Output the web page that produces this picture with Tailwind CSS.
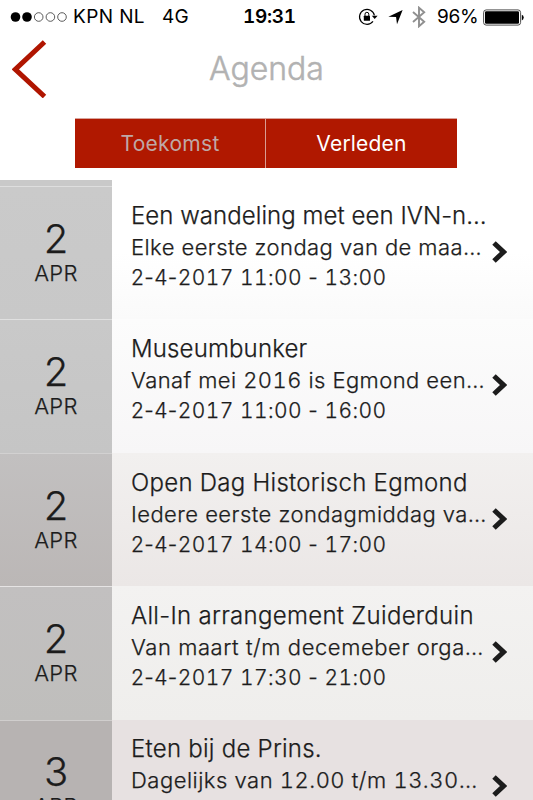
<!DOCTYPE html>
<html lang="nl">
  <head>
    <meta charset="UTF-8" />
    <meta name="viewport" content="width=device-width, initial-scale=1.0" />
    <title>Agenda</title>
    <script src="https://cdn.jsdelivr.net/npm/@tailwindcss/browser@4"></script>
  </head>
  <body
    class="h-[800px] w-[533px] overflow-hidden bg-white font-['Inter','Liberation_Sans',sans-serif] text-[#1c1c1c]"
  >
    <!-- Status bar -->
    <div class="flex h-[34px] items-center text-[19px] leading-[34px] text-black">
      <svg class="ml-[10px] h-[12px] w-[58px] shrink-0" viewBox="0 0 58 12">
        <circle cx="5.5" cy="6" r="4.8" />
        <circle cx="17" cy="6" r="4.8" />
        <g fill="none" stroke="#333" stroke-width="0.8">
          <circle cx="28.7" cy="6" r="4.3" />
          <circle cx="40.4" cy="6" r="4.3" />
          <circle cx="52" cy="6" r="4.3" />
        </g>
      </svg>
      <span class="ml-[5px] w-[89px] shrink-0 tracking-[0.4px] whitespace-nowrap">KPN NL</span>
      <span class="w-[81px] shrink-0 tracking-[0.2px]">4G</span>
      <span class="w-[115px] shrink-0 font-semibold tracking-[-0.3px] tabular-nums">19:31</span>
      <!-- Rotation lock -->
      <svg class="h-[20px] w-[20px] shrink-0" viewBox="0 0 20 20">
        <path
          d="M16.4 8.4A7.5 7.5 0 1 0 15 14.4"
          fill="none"
          stroke="#000"
          stroke-width="1.2"
        />
        <path d="M13.8 8.8H19.6L16.7 12Z" />
        <rect x="5.8" y="8.8" width="6.2" height="5" rx="0.5" />
        <path
          d="M7 9V7.2a1.9 1.9 0 0 1 3.8 0V9"
          fill="none"
          stroke="#000"
          stroke-width="1"
        />
      </svg>
      <!-- Location -->
      <svg class="ml-[10px] h-[16px] w-[15px] shrink-0" viewBox="0 0 16 16">
        <path d="M15.6 0.4L9.6 15.6L8.6 8L0.4 7.6Z" />
      </svg>
      <!-- Bluetooth -->
      <svg class="ml-[9px] h-[22px] w-[14px] shrink-0" viewBox="0 0 14 22">
        <path
          d="M1 6L12.2 15.8L7 20.3V1.7L12.2 6.2L1 16"
          fill="none"
          stroke="#909090"
          stroke-width="1.9"
        />
      </svg>
      <span class="ml-[11px] w-[46px] shrink-0 tracking-[-0.3px]">96%</span>
      <!-- Battery -->
      <svg class="h-[17px] w-[42px] shrink-0" viewBox="0 0 42 17">
        <rect
          x="0.6"
          y="0.9"
          width="37"
          height="15.2"
          rx="2.6"
          fill="none"
          stroke="#222"
          stroke-width="0.8"
        />
        <rect x="2" y="2.3" width="34" height="12.4" rx="1.2" />
        <path d="M38.8 5.8a3 3 0 0 1 0 5.6Z" />
      </svg>
    </div>

    <!-- Header -->
    <div class="grid h-[84px] grid-cols-[112px_1fr_112px]">
      <button class="flex items-start pt-[6px] pl-[12px]">
        <svg class="h-[58px] w-[35px]" viewBox="0 0 35 58">
          <path
            d="M32.5 2L3.3 29.3L32.5 56.5"
            fill="none"
            stroke="#b01500"
            stroke-width="5"
          />
        </svg>
      </button>
      <h1 class="pt-[15px] text-center text-[32px] leading-[40px] font-light text-[#b2b2b2] [-webkit-text-stroke:0.5px]">
        Agenda
      </h1>
    </div>

    <!-- Tabs -->
    <div
      class="ml-[75px] flex h-[50px] w-[382px] border-t border-[#d8a49c] bg-[#b01800] text-center text-[21px] leading-[49px]"
    >
      <div class="w-[191px] border-r border-[#d99c92] text-[#bfa8a6] tracking-[0.3px]">Toekomst</div>
      <div class="flex-1 text-white tracking-[0.2px]">Verleden</div>
    </div>

    <!-- Event list -->
    <div class="mt-[12px] h-[620px] overflow-hidden font-light [-webkit-text-stroke:0.25px]">
      <div class="flex h-[6px]">
        <div class="w-[112px] bg-[#c9c9c9]"></div>
      </div>

      <div class="flex h-[133.4px] bg-linear-to-b from-white via-white to-[#fafafa]">
        <div class="w-[112px] border-t border-[#dedede] bg-linear-to-b from-[#cacaca] to-[#c8c8c8] pt-[31px] text-center">
          <div class="text-[40px] leading-[42px]">2</div>
          <div class="text-[22px] leading-[26px] tracking-[0.3px]">APR</div>
        </div>
        <div class="w-[379px] pt-[14px] pl-[19px] whitespace-nowrap">
          <h2 class="text-[24px] leading-[32px] font-light tracking-[0.05px]">Een wandeling met een IVN-n…</h2>
          <p class="text-[22px] leading-[31px] tracking-[0.43px]">Elke eerste zondag van de maa…</p>
          <p class="text-[21px] leading-[29px] tracking-[0.4px]">
            2-4-<span class="tabular-nums">2017</span> <span class="tabular-nums">11:00</span> -
            <span class="tabular-nums">13:00</span>
          </p>
        </div>
        <svg class="mt-[55px] h-[22px] w-[16px] shrink-0" viewBox="0 0 16 22">
          <path d="M3 2L12.5 11L3 20" fill="none" stroke="#1c1c1c" stroke-width="5" />
        </svg>
      </div>

      <div class="flex h-[133.4px] bg-linear-to-b from-[#fcfcfc] to-[#f7f6f7]">
        <div class="w-[112px] border-t border-[#e0e0e0] bg-linear-to-b from-[#c9c9c9] to-[#c5c5c5] pt-[31px] text-center">
          <div class="text-[40px] leading-[42px]">2</div>
          <div class="text-[22px] leading-[26px] tracking-[0.3px]">APR</div>
        </div>
        <div class="w-[379px] pt-[14px] pl-[19px] whitespace-nowrap">
          <h2 class="text-[24px] leading-[32px] font-light tracking-[0.15px]">Museumbunker</h2>
          <p class="text-[22px] leading-[31px] tracking-[0.43px]">
            Vanaf mei <span class="tabular-nums">2016</span> is Egmond een…
          </p>
          <p class="text-[21px] leading-[29px] tracking-[0.4px]">
            2-4-<span class="tabular-nums">2017</span> <span class="tabular-nums">11:00</span> -
            <span class="tabular-nums">16:00</span>
          </p>
        </div>
        <svg class="mt-[55px] h-[22px] w-[16px] shrink-0" viewBox="0 0 16 22">
          <path d="M3 2L12.5 11L3 20" fill="none" stroke="#1c1c1c" stroke-width="5" />
        </svg>
      </div>

      <div class="flex h-[133.4px] bg-linear-to-b from-[#f2f0ef] to-[#ebe7e6]">
        <div class="w-[112px] border-t border-[#d2d1d1] bg-linear-to-b from-[#c2c0c0] to-[#bbb7b6] pt-[31px] text-center">
          <div class="text-[40px] leading-[42px]">2</div>
          <div class="text-[22px] leading-[26px] tracking-[0.3px]">APR</div>
        </div>
        <div class="w-[379px] pt-[14px] pl-[19px] whitespace-nowrap">
          <h2 class="text-[24px] leading-[32px] font-light tracking-[0.27px]">Open Dag Historisch Egmond</h2>
          <p class="text-[22px] leading-[31px] tracking-[0.45px]">Iedere eerste zondagmiddag va…</p>
          <p class="text-[21px] leading-[29px] tracking-[0.4px]">
            2-4-<span class="tabular-nums">2017</span> <span class="tabular-nums">14:00</span> -
            <span class="tabular-nums">17:00</span>
          </p>
        </div>
        <svg class="mt-[55px] h-[22px] w-[16px] shrink-0" viewBox="0 0 16 22">
          <path d="M3 2L12.5 11L3 20" fill="none" stroke="#1c1c1c" stroke-width="5" />
        </svg>
      </div>

      <div class="flex h-[133.4px] bg-linear-to-b from-[#f3f2f1] to-[#efeeec]">
        <div class="w-[112px] border-t border-[#e6e4e4] bg-linear-to-b from-[#c2c0c0] to-[#bfbebc] pt-[31px] text-center">
          <div class="text-[40px] leading-[42px]">2</div>
          <div class="text-[22px] leading-[26px] tracking-[0.3px]">APR</div>
        </div>
        <div class="w-[379px] pt-[14px] pl-[19px] whitespace-nowrap">
          <h2 class="text-[24px] leading-[32px] font-light tracking-[0.3px]">All-In arrangement Zuiderduin</h2>
          <p class="text-[22px] leading-[31px] tracking-[0.57px]">Van maart t/m decemeber orga…</p>
          <p class="text-[21px] leading-[29px] tracking-[0.4px]">
            2-4-<span class="tabular-nums">2017</span> <span class="tabular-nums">17:30</span> -
            <span class="tabular-nums">21:00</span>
          </p>
        </div>
        <svg class="mt-[55px] h-[22px] w-[16px] shrink-0" viewBox="0 0 16 22">
          <path d="M3 2L12.5 11L3 20" fill="none" stroke="#1c1c1c" stroke-width="5" />
        </svg>
      </div>

      <div class="flex h-[133.4px] bg-[#e7e1e1]">
        <div class="w-[112px] border-t border-[#d0cecd] bg-[#b7b3b2] pt-[30px] text-center">
          <div class="text-[40px] leading-[42px]">3</div>
          <div class="text-[22px] leading-[26px] tracking-[0.3px]">APR</div>
        </div>
        <div class="w-[379px] pt-[13px] pl-[19px] whitespace-nowrap">
          <h2 class="text-[24px] leading-[32px] font-light tracking-[0.25px]">Eten bij de Prins.</h2>
          <p class="text-[22px] leading-[31px] tracking-[0.5px]">
            Dagelijks van <span class="tabular-nums">12.00</span> t/m
            <span class="tabular-nums">13.30</span>…
          </p>
        </div>
        <svg class="mt-[55px] h-[22px] w-[16px] shrink-0" viewBox="0 0 16 22">
          <path d="M3 2L12.5 11L3 20" fill="none" stroke="#1c1c1c" stroke-width="5" />
        </svg>
      </div>
    </div>
  </body>
</html>
